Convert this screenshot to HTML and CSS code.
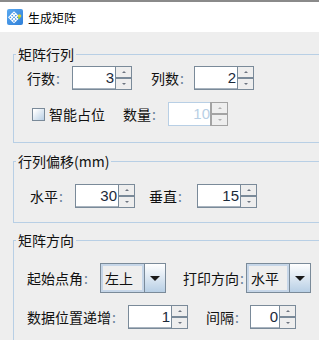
FILE: index.html
```html
<!DOCTYPE html>
<html lang="zh-CN">
<head>
  <meta charset="UTF-8">
  <title>生成矩阵</title>
  <link rel="stylesheet" href="styles.css">
</head>
<body>
  <header class="titlebar">
    <svg class="app-icon" width="16" height="16" viewBox="0 0 16 16">
      <defs>
        <linearGradient id="ig" x1="0" y1="0" x2="1" y2="1">
          <stop offset="0" stop-color="#5aa9f0"/>
          <stop offset="1" stop-color="#2f7fd8"/>
        </linearGradient>
      </defs>
      <rect x="0" y="0" width="16" height="16" rx="2" fill="url(#ig)"/>
      <g transform="rotate(45 7 8)" fill="none" stroke="#fff" stroke-width="1">
        <rect x="3.5" y="4.5" width="2.5" height="2.5"/>
        <rect x="6" y="4.5" width="2.5" height="2.5"/>
        <rect x="8.5" y="4.5" width="2.5" height="2.5"/>
        <rect x="3.5" y="7" width="2.5" height="2.5"/>
        <rect x="8.5" y="7" width="2.5" height="2.5"/>
        <rect x="3.5" y="9.5" width="2.5" height="2.5"/>
        <rect x="6" y="9.5" width="2.5" height="2.5"/>
        <rect x="8.5" y="9.5" width="2.5" height="2.5"/>
      </g>
      <circle cx="12.5" cy="7" r="1.8" fill="#d6d23a"/>
      <circle cx="12" cy="9" r="1" fill="#7cc242"/>
    </svg>
    <span class="title">生成矩阵</span>
  </header>

  <main class="main">
    <!-- 矩阵行列 -->
    <fieldset class="group group-size">
      <legend>矩阵行列</legend>
      <div class="row row-a">
        <span class="lbl w45">行数<i>:</i></span>
        <div class="spinner">
          <div class="spin-text">3</div>
          <div class="spin-btns"><span class="up"></span><span class="down"></span></div>
        </div>
        <span class="lbl w43 ml19">列数<i>:</i></span>
        <div class="spinner">
          <div class="spin-text">2</div>
          <div class="spin-btns"><span class="up"></span><span class="down"></span></div>
        </div>
      </div>
      <div class="row row-b">
        <span class="check"></span>
        <span class="lbl w56">智能占位</span>
        <span class="lbl w45 ml18">数量<i>:</i></span>
        <div class="spinner disabled">
          <div class="spin-text">10</div>
          <div class="spin-btns"><span class="up"></span><span class="down"></span></div>
        </div>
      </div>
    </fieldset>

    <!-- 行列偏移 -->
    <fieldset class="group group-offset">
      <legend>行列偏移(mm)</legend>
      <div class="row row-c">
        <span class="lbl w45">水平<i>:</i></span>
        <div class="spinner">
          <div class="spin-text">30</div>
          <div class="spin-btns"><span class="up"></span><span class="down"></span></div>
        </div>
        <span class="lbl w48 ml14">垂直<i>:</i></span>
        <div class="spinner">
          <div class="spin-text">15</div>
          <div class="spin-btns"><span class="up"></span><span class="down"></span></div>
        </div>
      </div>
    </fieldset>

    <!-- 矩阵方向 -->
    <fieldset class="group group-dir">
      <legend>矩阵方向</legend>
      <div class="row row-a">
        <span class="lbl w73">起始点角<i>:</i></span>
        <div class="combo w66">
          <div class="combo-text">左上</div>
          <div class="combo-btn"><span class="tri"></span></div>
        </div>
        <span class="lbl w63 ml17">打印方向<i>:</i></span>
        <div class="combo w65">
          <div class="combo-text">水平</div>
          <div class="combo-btn"><span class="tri"></span></div>
        </div>
      </div>
      <div class="row row-d">
        <span class="lbl w101">数据位置递增<i>:</i></span>
        <div class="spinner">
          <div class="spin-text">1</div>
          <div class="spin-btns"><span class="up"></span><span class="down"></span></div>
        </div>
        <span class="lbl w44 ml18">间隔<i>:</i></span>
        <div class="spinner narrow">
          <div class="spin-text">0</div>
          <div class="spin-btns"><span class="up"></span><span class="down"></span></div>
        </div>
      </div>
    </fieldset>
  </main>
</body>
</html>
```

FILE: styles.css
```css
body {
  margin: 0;
  width: 319px;
  height: 340px;
  overflow: hidden;
  background-color: #eeeeee;
  font-family: "Noto Sans CJK SC", "Liberation Sans", sans-serif;
  font-size: 14px;
  color: #111;
}

/* Window title */
.titlebar {
  display: flex;
  align-items: center;
  height: 30px;
  padding-left: 7px;
  border-top: 2px solid #8a8a8a;
  background-color: #ffffff;
}

.app-icon {
  flex: none;
  margin-right: 5px;
}

.title {
  font-size: 12px;
  color: #000;
}

/* Groups */
.main {
  display: flex;
  flex-direction: column;
  padding-left: 13px;
}

.group {
  margin: 0;
  min-width: 0;
  border: 1px solid #b8cfe5;
  border-right: none;
}

.group legend {
  margin-left: 2px;
  padding: 0 2px;
  line-height: 18px;
  font-size: 14px;
}

.group-size {
  margin-top: 13px;
  padding: 3px 0 16px 0;
}

.group-offset {
  margin-top: 9px;
  padding: 14px 0 14px 0;
}

.group-dir {
  margin-top: 8px;
  padding: 14px 0 20px 0;
}

.row {
  display: flex;
  align-items: center;
}

.row-a { padding-left: 13px; }
.row-b { padding-left: 18px; margin-top: 12px; }
.row-c { padding-left: 16px; }
.row-d { padding-left: 13px; margin-top: 12px; }

.lbl {
  flex: none;
  white-space: nowrap;
}

.lbl i {
  font-style: normal;
  color: #6a7f99;
  margin-left: 1px;
}

.w43 { width: 43px; }
.w44 { width: 44px; }
.w45 { width: 45px; }
.w48 { width: 48px; }
.w56 { width: 56px; }
.w63 { width: 63px; }
.w73 { width: 73px; }
.w101 { width: 101px; }

.ml14 { margin-left: 14px; }
.ml17 { margin-left: 17px; }
.ml18 { margin-left: 18px; }
.ml19 { margin-left: 19px; }

/* Checkbox */
.check {
  flex: none;
  width: 11px;
  height: 11px;
  margin-right: 4px;
  border: 1px solid #7a8a99;
  background: linear-gradient(135deg, #ffffff 10%, #b8cfe5 100%);
}

/* Spinner */
.spinner {
  flex: none;
  display: flex;
  width: 60px;
  height: 24px;
  box-sizing: border-box;
  border: 1px solid #7a8a99;
  background-color: #ffffff;
}

.spinner.narrow {
  width: 46px;
}

.spin-text {
  flex: 1;
  text-align: right;
  padding-right: 1px;
  font-family: "Liberation Sans", sans-serif;
  font-size: 15px;
  line-height: 22px;
  color: #1c2a3a;
  border-bottom: 1px solid #a9b4bf;
}

.spin-btns {
  flex: none;
  display: flex;
  flex-direction: column;
  width: 15px;
  border-left: 1px solid #7a8a99;
  background-color: #eeeeee;
}

.spin-btns span {
  flex: 1;
  display: flex;
  align-items: center;
  justify-content: center;
}

.spin-btns .up {
  border-bottom: 2px solid #7a8a99;
}

.spin-btns .up::after,
.spin-btns .down::after {
  content: "";
  border-left: 2px solid transparent;
  border-right: 2px solid transparent;
}

.spin-btns .up::after {
  border-bottom: 2px solid #6d7480;
}

.spin-btns .down::after {
  border-top: 2px solid #6d7480;
}

.spinner.disabled {
  border-color: #b8cfe5;
}

.spinner.disabled .spin-text {
  color: #b8cfe5;
  border-bottom: none;
}

.spinner.disabled .spin-btns {
  border-left-color: #a3a3a3;
  outline: 1px solid #a3a3a3;
}

.spinner.disabled .spin-btns .up {
  border-bottom-color: #a3a3a3;
}

.spinner.disabled .spin-btns span::after {
  border-top-color: #b0b0b0;
  border-bottom-color: #b0b0b0;
}

/* Combo box */
.combo {
  flex: none;
  display: flex;
  height: 30px;
  box-sizing: border-box;
  border: 1px solid #7a8a99;
}

.w65 { width: 65px; }
.w66 { width: 66px; }

.combo-text {
  flex: 1;
  padding-left: 2px;
  line-height: 24px;
  background-color: #eeeeee;
  border: 2px solid #c6d6e8;
}

.combo-btn {
  flex: none;
  width: 20px;
  display: flex;
  align-items: center;
  justify-content: center;
  border-left: 1px solid #7a8a99;
  background: linear-gradient(#ffffff, #b8cfe5);
}

.tri {
  border-left: 5px solid transparent;
  border-right: 5px solid transparent;
  border-top: 5px solid #1a1a1a;
}
```
